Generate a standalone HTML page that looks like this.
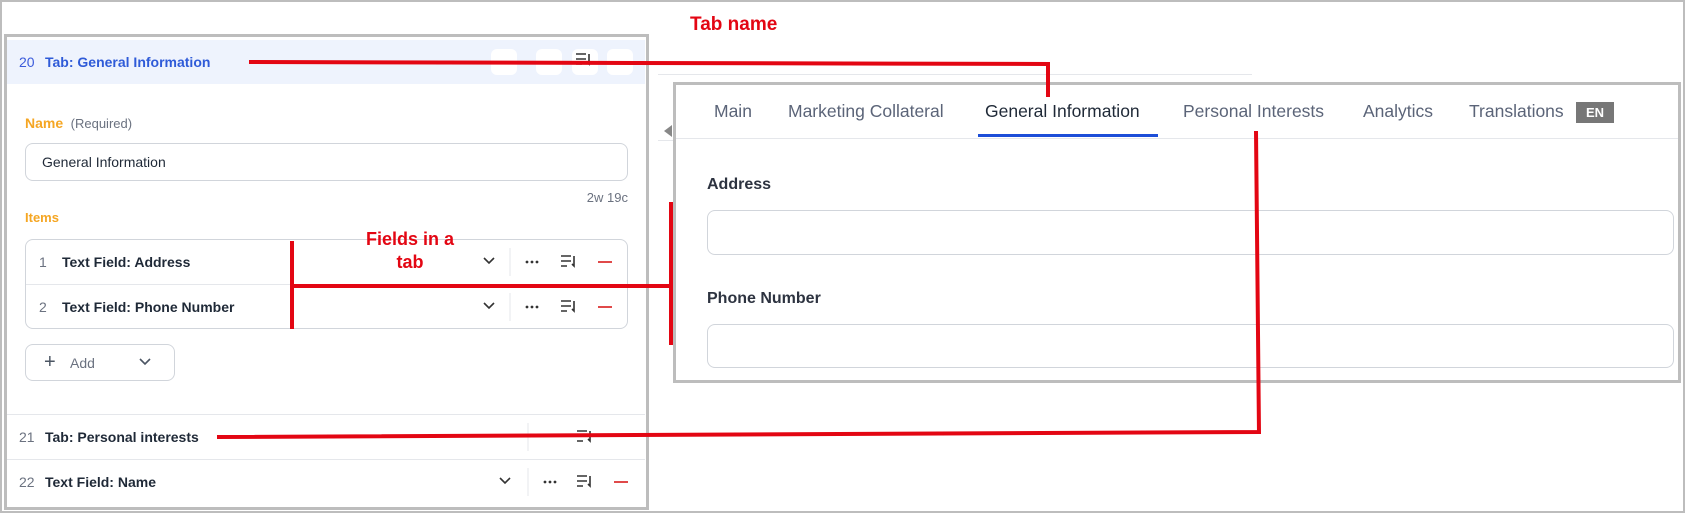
<!DOCTYPE html>
<html><head><meta charset="utf-8"><style>
*{box-sizing:border-box;margin:0;padding:0}
body{width:1685px;height:513px;position:relative;overflow:hidden;background:#fff;font-family:"Liberation Sans",sans-serif;color:#1f2937}
.a{position:absolute}
.frame{left:0;top:0;width:1685px;height:513px;border:2px solid #bdbdbd}
.lp{left:4px;top:34px;width:645px;height:476px;border:3px solid #bdbdbd;background:#fff}
.t{font-size:14px;white-space:nowrap}
.inp{border:1px solid #d1d5db;border-radius:8px;background:#fff}
.tab{font-size:17.5px;color:#5b6478;top:101px;white-space:nowrap}
</style></head><body>
<div class="a frame"></div>
<div class="a lp"></div>
<div class="a" style="left:7px;top:40px;width:638px;height:44px;background:#eef3fd"></div>
<div class="a t" style="left:19px;top:54px;color:#3b5bdb">20</div>
<div class="a t" style="left:45px;top:54px;color:#2f5bd8;font-weight:bold">Tab: General Information</div>
<div class="a" style="left:491px;top:49px;width:26px;height:26px;background:#fff;border-radius:6px"></div>
<div class="a" style="left:536px;top:49px;width:26px;height:26px;background:#fff;border-radius:6px"></div>
<div class="a" style="left:572px;top:49px;width:26px;height:26px;background:#fff;border-radius:6px"></div>
<div class="a" style="left:607px;top:49px;width:26px;height:26px;background:#fff;border-radius:6px"></div>

<div class="a t" style="left:25px;top:115px;color:#f5a623;font-weight:bold">Name <span style="color:#6b7280;font-weight:normal;font-size:13px">&nbsp;(Required)</span></div>
<div class="a inp" style="left:25px;top:143px;width:603px;height:38px"></div>
<div class="a t" style="left:42px;top:154px">General Information</div>
<div class="a t" style="left:570px;top:190px;width:58px;text-align:right;color:#6b7280;font-size:13px">2w 19c</div>
<div class="a t" style="left:25px;top:210px;color:#f5a623;font-weight:bold;font-size:13px">Items</div>
<div class="a inp" style="left:25px;top:239px;width:603px;height:90px"></div>
<div class="a" style="left:26px;top:284px;width:601px;height:1px;background:#e5e7eb"></div>

<div class="a t" style="left:39px;top:254px;color:#6b7280">1</div>
<div class="a t" style="left:62px;top:254px;font-weight:bold">Text Field: Address</div>
<div class="a t" style="left:39px;top:299px;color:#6b7280">2</div>
<div class="a t" style="left:62px;top:299px;font-weight:bold">Text Field: Phone Number</div>

<div class="a t" style="left:25px;top:344px;width:150px;height:37px;border:1px solid #d1d5db;border-radius:8px"></div>
<div class="a" style="left:44px;top:355px;font-size:20px;color:#4b5563;line-height:14px">+</div>
<div class="a t" style="left:70px;top:355px;color:#6b7280">Add</div>

<div class="a" style="left:7px;top:414px;width:638px;height:1px;background:#e5e7eb"></div>
<div class="a" style="left:7px;top:459px;width:638px;height:1px;background:#e5e7eb"></div>
<div class="a t" style="left:19px;top:429px;color:#6b7280">21</div>
<div class="a t" style="left:45px;top:429px;font-weight:bold">Tab: Personal interests</div>
<div class="a t" style="left:19px;top:474px;color:#6b7280">22</div>
<div class="a t" style="left:45px;top:474px;font-weight:bold">Text Field: Name</div>

<svg class="a" style="left:0;top:0" width="660" height="513">
<g fill="none" stroke="#333" stroke-width="1.6">
<path d="M484 258l5 5 5-5M484 303l5 5 5-5M500 478l5 5 5-5"/>
<path d="M561 256h10M561 261h10M561 266h6M574 256v10l-2-2M561 301h10M561 306h10M561 311h6M574 301v10l-2-2M577 431h10M577 436h10M577 441h6M590 431v10l-2-2M577 476h10M577 481h10M577 486h6M590 476v10l-2-2M576 54h10M576 59h10M576 64h6M589 54v10l-2-2"/>
<path d="M140 359l5 5 5-5" stroke="#4b5563"/>
</g>
<g fill="#333"><circle cx="527" cy="262" r="1.4"/><circle cx="532" cy="262" r="1.4"/><circle cx="537" cy="262" r="1.4"/>
<circle cx="527" cy="307" r="1.4"/><circle cx="532" cy="307" r="1.4"/><circle cx="537" cy="307" r="1.4"/>
<circle cx="545" cy="482" r="1.4"/><circle cx="550" cy="482" r="1.4"/><circle cx="555" cy="482" r="1.4"/></g>
<g stroke="#e04a4a" stroke-width="2"><path d="M598 262h14M598 307h14M614 482h14"/></g>
<g stroke="#e5e7eb"><path d="M510 248v28M510 293v28M528 423v28M528 468v28"/></g>
</svg>

<div class="a" style="left:658px;top:74px;width:594px;height:1px;background:#e5e7eb"></div>
<div class="a" style="left:658px;top:140px;width:20px;height:1px;background:#e5e7eb"></div>
<div class="a" style="left:664px;top:125px;width:0;height:0;border-top:6px solid transparent;border-bottom:6px solid transparent;border-right:8px solid #888"></div>

<div class="a" style="left:673px;top:82px;width:1008px;height:301px;border:3px solid #bdbdbd;background:#fff"></div>
<div class="a" style="left:676px;top:138px;width:1002px;height:1px;background:#e5e7eb"></div>
<div class="a tab" style="left:714px">Main</div>
<div class="a tab" style="left:788px">Marketing Collateral</div>
<div class="a tab" style="left:985px;color:#1f2937">General Information</div>
<div class="a tab" style="left:1183px">Personal Interests</div>
<div class="a tab" style="left:1363px">Analytics</div>
<div class="a tab" style="left:1469px">Translations</div>
<div class="a" style="left:1576px;top:102px;width:38px;height:21px;background:#777;color:#fff;font-size:13px;font-weight:bold;text-align:center;line-height:21px">EN</div>
<div class="a" style="left:978px;top:134px;width:180px;height:3px;background:#1d4ed8"></div>
<div class="a" style="left:707px;top:176px;font-size:16px;font-weight:bold;color:#2d3340">Address</div>
<div class="a inp" style="left:707px;top:210px;width:967px;height:45px"></div>
<div class="a" style="left:707px;top:290px;font-size:16px;font-weight:bold;color:#2d3340">Phone Number</div>
<div class="a inp" style="left:707px;top:324px;width:967px;height:44px"></div>

<div class="a" style="left:690px;top:14px;font-size:19px;font-weight:bold;color:#e30613">Tab name</div>
<div class="a" style="left:340px;top:228px;width:140px;text-align:center;font-size:18px;font-weight:bold;color:#e30613;line-height:23px">Fields in a<br>tab</div>
<svg class="a" style="left:0;top:0" width="1685" height="513">
<g stroke="#e30613" stroke-width="4" fill="none">
<path d="M249 62L1048 64V97"/>
<path d="M292 241V329M292 286H671M671 202V345"/>
<path d="M217 437L1259 432M1256 131L1259 434"/>
</g></svg>
</body></html>
